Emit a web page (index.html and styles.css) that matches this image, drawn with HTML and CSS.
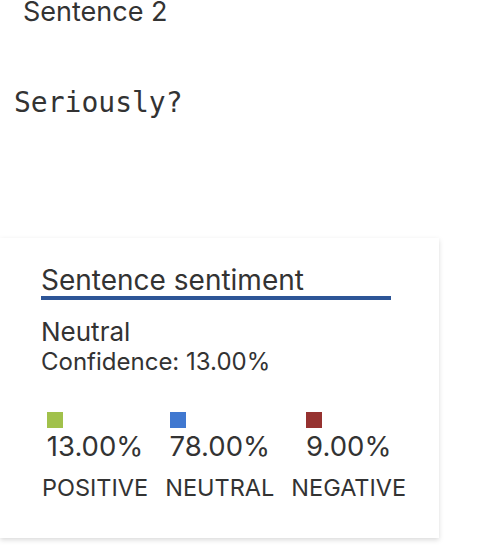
FILE: index.html
```html
<!DOCTYPE html>
<html>
<head>
<meta charset="utf-8">
<link rel="stylesheet" href="styles.css">
</head>
<body>
<div class="sentence-label">Sentence 2</div>
<div class="sentence-text">Seriously?</div>
<div class="card">
  <div class="card-title">Sentence sentiment</div>
  <div class="verdict">Neutral</div>
  <div class="confidence">Confidence: 13.00%</div>
  <div class="scores">
    <div class="score">
      <div class="score-top">
        <span class="swatch swatch-pos"></span>
        <div class="pct">13.00%</div>
      </div>
      <div class="label">POSITIVE</div>
    </div>
    <div class="score">
      <div class="score-top">
        <span class="swatch swatch-neu"></span>
        <div class="pct">78.00%</div>
      </div>
      <div class="label">NEUTRAL</div>
    </div>
    <div class="score">
      <div class="score-top">
        <span class="swatch swatch-neg"></span>
        <div class="pct">9.00%</div>
      </div>
      <div class="label">NEGATIVE</div>
    </div>
  </div>
</div>
</body>
</html>
```
FILE: styles.css
```css
html, body {
  margin: 0;
  padding: 0;
  background: #ffffff;
}
body {
  font-family: Inter, "Noto Sans", sans-serif;
  color: #333333;
  width: 480px;
  height: 548px;
  overflow: hidden;
}
.sentence-label {
  font-size: 27px;
  line-height: 24px;
  padding-left: 23px;
}
.sentence-text {
  font-family: "DejaVu Sans Mono", monospace;
  font-size: 28px;
  line-height: 34px;
  padding-left: 14px;
  margin-top: 62px;
}
.card {
  margin-top: 118px;
  width: 439px;
  box-sizing: border-box;
  padding: 26px 0 36px 41px;
  background: #ffffff;
  box-shadow: 0 2px 5px rgba(0, 0, 0, 0.15);
}
.card-title {
  width: 350px;
  font-size: 28px;
  line-height: 32px;
  border-bottom: 4px solid #2d5597;
}
.verdict {
  margin-top: 16px;
  font-size: 26px;
  line-height: 31px;
}
.confidence {
  margin-top: 2px;
  font-size: 24px;
  line-height: 26px;
}
.scores {
  display: flex;
  gap: 17px;
  margin-top: 37px;
  margin-left: 1px;
}
.score {
  display: flex;
  flex-direction: column;
  align-items: center;
}
.score-top {
  display: flex;
  flex-direction: column;
  align-items: flex-start;
}
.swatch {
  display: block;
  width: 16px;
  height: 16px;
  margin-bottom: 2px;
}
.swatch-pos { background: #a1c14b; }
.swatch-neu { background: #4078d0; }
.swatch-neg { background: #963230; }
.pct {
  font-size: 27.5px;
  line-height: 32px;
}
.label {
  margin-top: 11.5px;
  font-size: 23.5px;
  line-height: 28px;
}
```
